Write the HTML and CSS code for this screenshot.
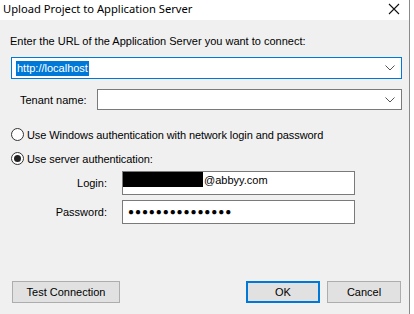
FILE: index.html
```html
<!DOCTYPE html>
<html lang="en">
<head>
  <meta charset="UTF-8" />
  <title>Upload Project to Application Server</title>
  <link rel="stylesheet" href="styles.css">
</head>
<body>
  <div class="window">
    <div class="titlebar">
      <span class="title">Upload Project to Application Server</span>
      <svg class="close" width="12" height="12" viewBox="0 0 12 12">
        <path d="M1 1 L11 11 M11 1 L1 11" stroke="#111" stroke-width="1.1" fill="none"/>
      </svg>
    </div>

    <div class="content">
      <div class="prompt">Enter the URL of the Application Server you want to connect:</div>

      <div class="combo url">
        <span class="selected">http://localhost</span>
        <svg class="chevron" width="10" height="6" viewBox="0 0 10 6">
          <path d="M0.5 0.5 L5 5 L9.5 0.5" stroke="#555" stroke-width="1" fill="none"/>
        </svg>
      </div>

      <div class="tenant-row">
        <label class="tenant-label">Tenant name:</label>
        <div class="combo tenant">
          <svg class="chevron" width="10" height="6" viewBox="0 0 10 6">
            <path d="M0.5 0.5 L5 5 L9.5 0.5" stroke="#555" stroke-width="1" fill="none"/>
          </svg>
        </div>
      </div>

      <div class="radio-row first">
        <span class="radio"></span>
        <span>Use Windows authentication with network login and password</span>
      </div>
      <div class="radio-row">
        <span class="radio checked"></span>
        <span>Use server authentication:</span>
      </div>

      <div class="field-row login">
        <label class="field-label">Login:</label>
        <div class="field">
          <span class="redact"></span><span class="domain">@abbyy.com</span>
        </div>
      </div>
      <div class="field-row">
        <label class="field-label">Password:</label>
        <div class="field">
          <span class="dots">&#9679;&#9679;&#9679;&#9679;&#9679;&#9679;&#9679;&#9679;&#9679;&#9679;&#9679;&#9679;&#9679;&#9679;&#9679;</span>
        </div>
      </div>

      <div class="buttons">
        <button class="btn test">Test Connection</button>
        <div class="right-buttons">
          <button class="btn ok">OK</button>
          <button class="btn cancel">Cancel</button>
        </div>
      </div>
    </div>
  </div>
</body>
</html>
```

FILE: styles.css
```css
body, html {
  margin: 0;
  padding: 0;
  background: #fff;
  font-family: 'Liberation Sans', Arial, sans-serif;
  font-size: 11px;
  color: #000;
}
.window {
  width: 409px;
  height: 314px;
  border-right: 1px solid #8a8a8a;
  display: flex;
  flex-direction: column;
}
.titlebar {
  height: 20px;
  background: #fff;
  display: flex;
  align-items: center;
  justify-content: space-between;
}
.title {
  font-family: 'Noto Sans', sans-serif;
  font-size: 11.2px;
  padding-left: 3px;
  margin-top: -3px;
  color: #000;
}
.close {
  margin-right: 9px;
  margin-top: -2px;
}
.content {
  flex: 1;
  background: #f0f0f0;
  padding: 0 7px 0 11px;
}
.prompt {
  margin: 15px 0 0 -1px;
  line-height: 13px;
}
.combo {
  box-sizing: border-box;
  background: #fff;
  border: 1px solid #7a7a7a;
  display: flex;
  align-items: center;
  justify-content: space-between;
}
.combo.url {
  margin-top: 9px;
  height: 22px;
  border-color: #0078d7;
  padding: 0 6px 0 4px;
}
.selected {
  background: #0078d7;
  color: #fff;
  line-height: 15px;
  padding: 0 1px;
}
.tenant-row {
  margin-top: 10px;
  display: flex;
  align-items: center;
}
.tenant-label {
  width: 86px;
  padding-left: 9px;
  box-sizing: border-box;
}
.combo.tenant {
  width: 306px;
  height: 21px;
  justify-content: flex-end;
  padding-right: 6px;
}
.radio-row {
  display: flex;
  align-items: center;
  height: 17px;
  margin-top: 7px;
  letter-spacing: -0.08px;
}
.radio-row.first {
  margin-top: 16px;
}
.radio {
  box-sizing: border-box;
  width: 13px;
  height: 13px;
  border: 1px solid #333;
  border-radius: 50%;
  background: #fff;
  margin-right: 3px;
  display: flex;
  align-items: center;
  justify-content: center;
}
.radio.checked::after {
  content: '';
  width: 7px;
  height: 7px;
  border-radius: 50%;
  background: #222;
}
.field-row {
  display: flex;
  align-items: center;
  margin-top: 5px;
}
.field-row.login {
  margin-top: 4px;
}
.field-label {
  width: 96px;
  text-align: right;
}
.field {
  box-sizing: border-box;
  margin-left: 15px;
  width: 233px;
  height: 24px;
  background: #fff;
  border: 1px solid #7a7a7a;
  display: flex;
  align-items: flex-start;
}
.redact {
  width: 80px;
  height: 15px;
  background: #000;
}
.domain {
  margin-top: 2px;
  margin-left: 1px;
}
.dots {
  font-size: 10px;
  letter-spacing: 0.9px;
  line-height: 12px;
  margin: 5px 0 0 5px;
}
.buttons {
  margin-top: 57px;
  display: flex;
  justify-content: space-between;
  align-items: center;
}
.right-buttons {
  display: flex;
  gap: 7px;
  margin-right: 1px;
}
.btn {
  box-sizing: border-box;
  height: 22px;
  width: 74px;
  background: #e1e1e1;
  border: 1px solid #adadad;
  font-family: 'Liberation Sans', Arial, sans-serif;
  font-size: 11px;
  color: #000;
  padding: 0;
}
.btn.test {
  width: 108px;
  margin-left: 1px;
}
.btn.ok {
  border: 2px solid #0078d7;
}
```
